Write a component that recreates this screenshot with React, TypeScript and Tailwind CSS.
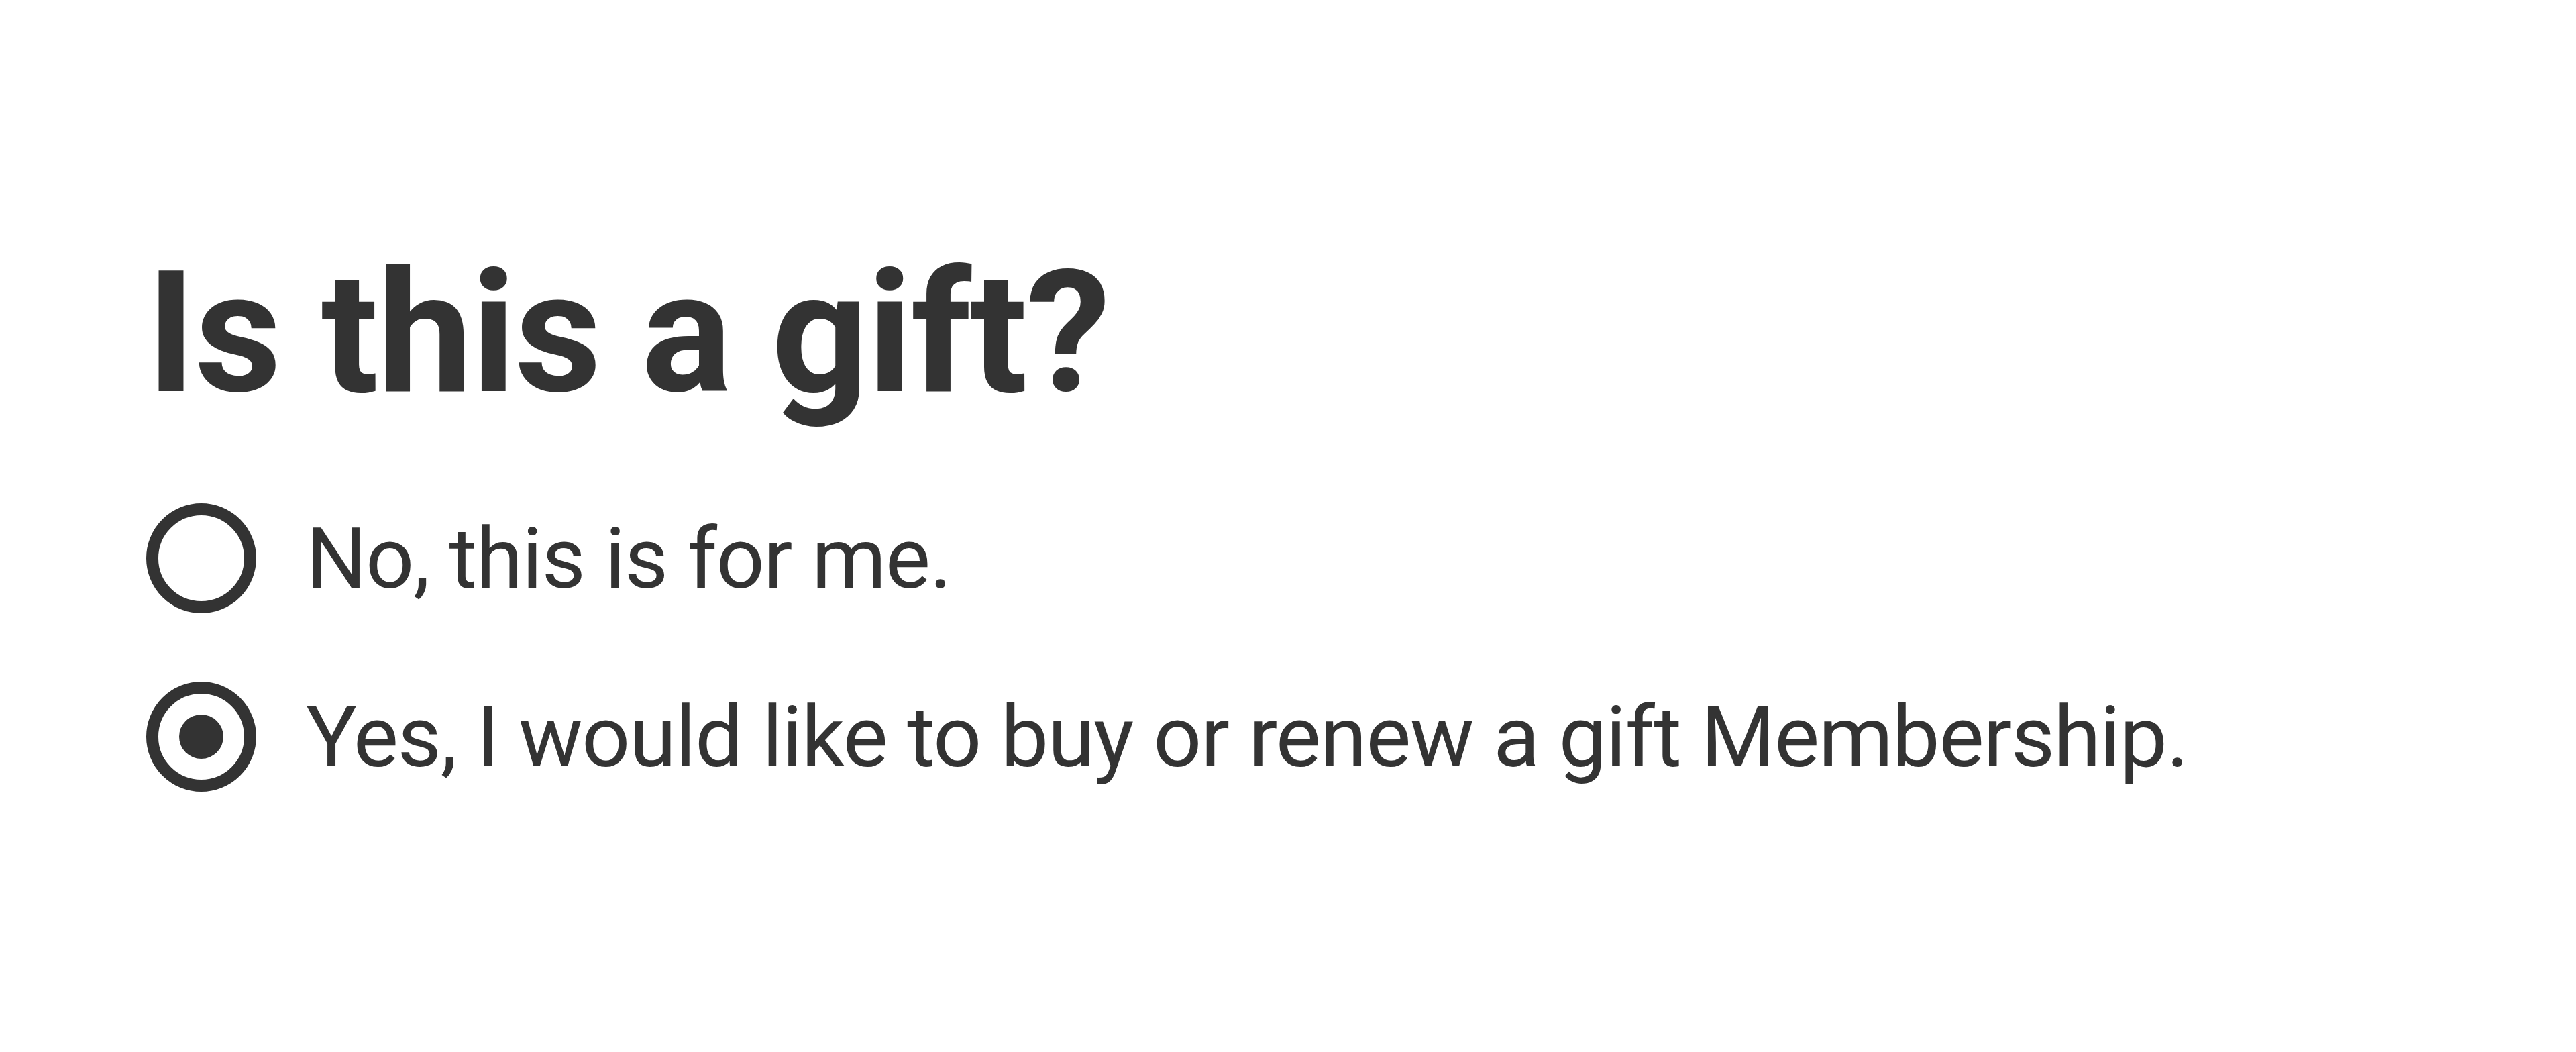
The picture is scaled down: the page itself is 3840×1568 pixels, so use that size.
import { useState } from 'react';

const options = [
    { id: 'self', label: 'No, this is for me.' },
    { id: 'gift', label: 'Yes, I would like to buy or renew a gift Membership.' },
];

export default function App() {
    const [selected, setSelected] = useState('gift');

    return (
        <div className="min-h-screen bg-white text-[#333333] font-['Roboto','Liberation_Sans',sans-serif]">
            <div className="pl-[218px] pt-[370px]">
                <h1 className="text-[253px] leading-none font-bold tracking-[-2px]">Is this a gift?</h1>

                <div className="mt-[127px] flex flex-col gap-[102px]">
                    {options.map(opt => (
                        <label
                            key={opt.id}
                            onClick={() => setSelected(opt.id)}
                            className="flex items-center gap-[74px] cursor-pointer"
                        >
                            <span className="w-[164px] h-[164px] shrink-0 rounded-full border-[18px] border-[#333333] flex items-center justify-center">
                                {selected === opt.id && (
                                    <span className="w-[66px] h-[66px] rounded-full bg-[#333333]"></span>
                                )}
                            </span>
                            <span className="text-[127px] leading-none tracking-[-1.5px]">{opt.label}</span>
                        </label>
                    ))}
                </div>
            </div>
        </div>
    );
}
